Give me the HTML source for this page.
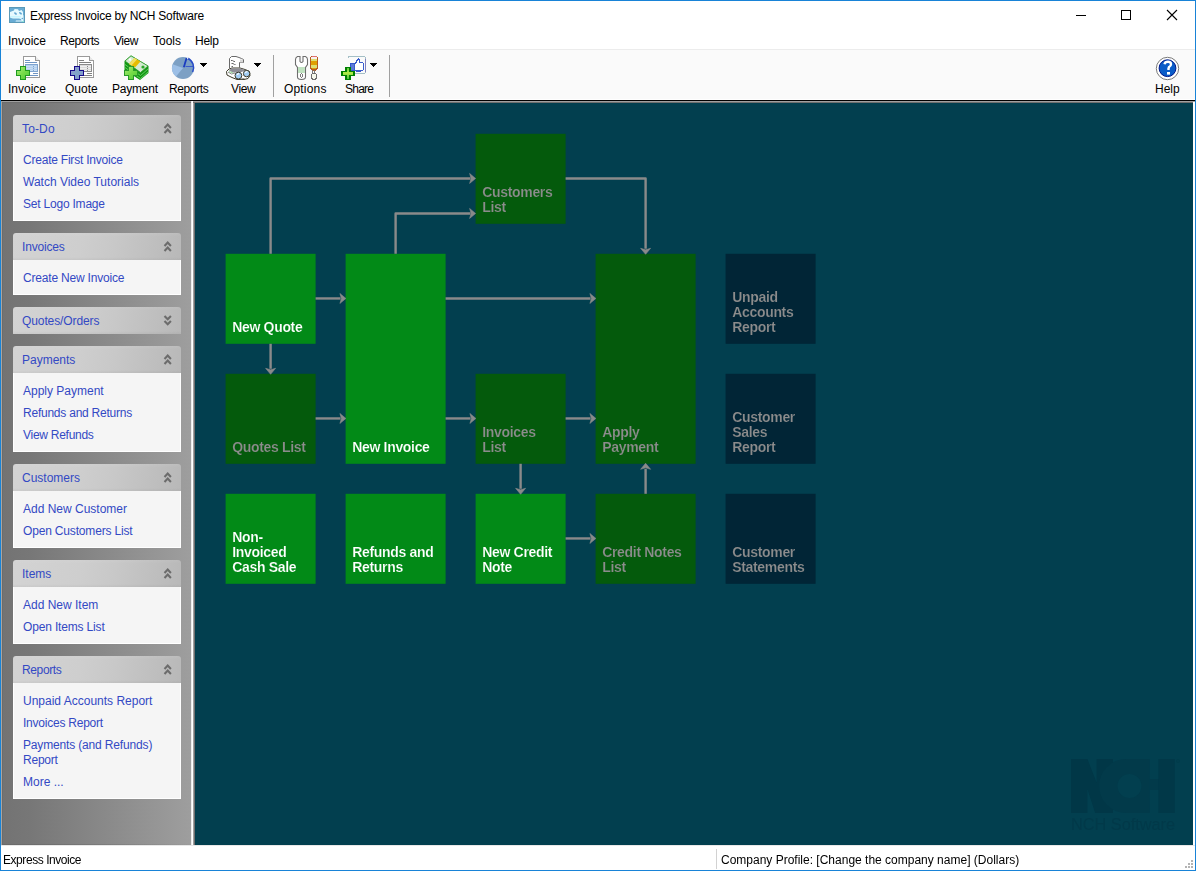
<!DOCTYPE html>
<html><head><meta charset="utf-8">
<style>
*{margin:0;padding:0;box-sizing:border-box}
html,body{width:1196px;height:871px;overflow:hidden;background:#fff}
body{position:relative;font-family:"Liberation Sans",sans-serif;font-size:12px;color:#000}
.a{position:absolute}
.t{position:absolute;white-space:nowrap;line-height:15px;padding-top:1px}
#win{position:absolute;left:0;top:0;width:1196px;height:871px;border:1px solid #1883d7;background:#fff}
#toolbar{position:absolute;left:1px;top:49px;width:1194px;height:51px;background:#fafafa;border-top:1px solid #ececec;border-bottom:1px solid #fff}
#tbline{position:absolute;left:1px;top:100px;width:1194px;height:1px;background:#000}
#tbline2{position:absolute;left:1px;top:101px;width:1194px;height:1px;background:#a0a0a0}
#sidebar{position:absolute;left:1px;top:102px;width:190px;height:743px;border-left:1px solid #aaa5a0;background:linear-gradient(to right,#737373 0%,#777 15%,#878787 50%,#959595 80%,#9e9e9e 100%)}
#sbl{position:absolute;left:2px;top:102px;width:1px;height:743px;background:#6c6c6c}
#sbb{position:absolute;left:2px;top:844px;width:189px;height:1px;background:linear-gradient(to right,#6a6a6a,rgba(150,150,150,0.2))}
#sbtop{position:absolute;left:2px;top:102px;width:189px;height:1px;background:#6e6e6e}
#vsplit{position:absolute;left:191px;top:101px;width:2px;height:744px;background:linear-gradient(to right,#ececec 50%,#fff 50%)}
#vdark{position:absolute;left:193px;top:101px;width:2px;height:744px;background:linear-gradient(to right,#a0a0a0 50%,#6e6e6e 50%)}
#main{position:absolute;left:195px;top:103px;width:998px;height:742px;background:#023f4f}
#mtop{position:absolute;left:193px;top:101px;width:1000px;height:2px;background:linear-gradient(#a0a0a0 50%,#6e6e6e 50%)}
.panel{position:absolute;left:13px;width:168px}
.ph{position:absolute;left:0;top:0;width:168px;height:27px;border-radius:3px 3px 0 0;
 background:linear-gradient(to bottom,rgba(255,255,255,0.05) 0,rgba(255,255,255,0) 4px,rgba(0,0,0,0) 24px,rgba(0,0,0,0.04) 27px),linear-gradient(100deg,#d3d3d3 0%,#cecece 40%,#c8c8c8 60%,#b8b8b8 100%)}
.ph span{position:absolute;left:9px;top:7px;color:#3349c4;line-height:15px}
.pc{position:absolute;left:0;top:27px;width:168px;background:#f5f5f5;border-left:1px solid #fff;border-right:1px solid #fff;border-bottom:1px solid #fff}
.pc div{position:absolute;left:9px;color:#3349c4;line-height:15px;white-space:nowrap}
.chev{position:absolute;left:150px;top:7px}
.box{position:absolute;width:90px;height:90px}
.box span{position:absolute;left:6.6px;bottom:9.3px;font-weight:bold;font-size:14px;letter-spacing:-0.32px;line-height:15px;white-space:nowrap}
.g1{background:#028a17}
.g2{background:#045a0c}
.nv{background:#012536}
.w{color:#fff}
.g1 span{-webkit-text-stroke:0.15px #028a17}
.g2 span{-webkit-text-stroke:0.15px #045a0c}
.nv span{-webkit-text-stroke:0.15px #012536}
.gr{color:#8c8c8c}
</style></head><body>
<div id="win"></div>
<!-- title bar -->
<svg class="a" style="left:9px;top:7px" width="16" height="16" viewBox="9 7 16 16">
<rect x="9.5" y="7.5" width="15" height="15" fill="#68acd4" stroke="#5b9ab8"/>
<path d="M10 12Q12 11 14 10.5L14.5 9L18 9.2L19 11L21.5 10L23 12V15L23.5 15.5V21.5H15.5L16 20.5H21.5L21 19L19 18.5H13L11 18L10 17Z" fill="#e6faff"/>
<ellipse cx="15.5" cy="13.5" rx="1.7" ry="0.9" transform="rotate(40 15.5 13.5)" fill="#62a6d2"/>
<ellipse cx="20.5" cy="13.2" rx="1.7" ry="0.9" transform="rotate(35 20.5 13.2)" fill="#62a6d2"/>
<circle cx="22.3" cy="18.5" r="0.8" fill="#62a6d2"/>
<path d="M10 16H21V17.5H10Z" fill="#c8f6ff"/>
<path d="M22 21H24V22H22Z" fill="#90e8d8"/>
</svg>
<div class="t" style="left:30px;top:8px;letter-spacing:-0.22px">Express Invoice by NCH Software</div>
<div class="a" style="left:1076px;top:15px;width:10px;height:1px;background:#000"></div>
<div class="a" style="left:1121px;top:10px;width:10px;height:10px;border:1px solid #000"></div>
<svg class="a" style="left:1166px;top:9px" width="12" height="12" viewBox="0 0 12 12"><path d="M1 1L11 11M11 1L1 11" stroke="#000" stroke-width="1.1"/></svg>
<!-- menu -->
<div class="t" style="left:8px;top:33px">Invoice</div>
<div class="t" style="left:60px;top:33px;letter-spacing:-0.4px">Reports</div>
<div class="t" style="left:114px;top:33px;letter-spacing:-0.5px">View</div>
<div class="t" style="left:153px;top:33px">Tools</div>
<div class="t" style="left:195px;top:33px;letter-spacing:-0.27px">Help</div>
<!-- toolbar -->
<div id="toolbar"></div>
<div id="tbline"></div><div id="tbline2"></div>
<svg class="a" style="left:0;top:50px" width="400" height="34" viewBox="0 50 400 34" shape-rendering="crispEdges">
<defs>
<linearGradient id="gp" x1="0" y1="0" x2="1" y2="1"><stop offset="0" stop-color="#a8ec80"/><stop offset="0.5" stop-color="#78dc48"/><stop offset="1" stop-color="#48c838"/></linearGradient>
<linearGradient id="bp" x1="0" y1="0" x2="1" y2="1"><stop offset="0" stop-color="#9a8fd4"/><stop offset="0.5" stop-color="#7fa6c8"/><stop offset="1" stop-color="#8d90d0"/></linearGradient>
<linearGradient id="sp" x1="0" y1="0" x2="0" y2="1"><stop offset="0" stop-color="#58c848"/><stop offset="0.45" stop-color="#b8ec48"/><stop offset="1" stop-color="#40c040"/></linearGradient>
</defs>
<!-- invoice doc -->
<g id="doc1">
<path d="M23.5 56.5H35.5L39.5 60.5V77.5H23.5Z" fill="#fff" stroke="#9a9a9a"/>
<path d="M35.5 56.5V60.5H39.5" fill="#e8e8e8" stroke="#9a9a9a"/>
<rect x="25" y="60" width="5" height="1" fill="#6f95c4"/>
<rect x="25" y="62" width="12" height="1" fill="#6f95c4"/>
<rect x="25" y="64" width="13" height="8" fill="#7fa4d0"/>
<rect x="26" y="66" width="7" height="1" fill="#c8def4"/><rect x="34" y="66" width="3" height="1" fill="#c8def4"/>
<rect x="26" y="68" width="7" height="1" fill="#c8def4"/><rect x="34" y="68" width="3" height="1" fill="#c8def4"/>
<rect x="26" y="70" width="7" height="1" fill="#c8def4"/><rect x="34" y="70" width="3" height="1" fill="#c8def4"/>
<rect x="26" y="65" width="11" height="1" fill="#b4d0ee"/><rect x="26" y="67" width="11" height="1" fill="#b4d0ee"/><rect x="26" y="69" width="11" height="1" fill="#b4d0ee"/>
<rect x="33" y="73" width="5" height="1" fill="#6f95c4"/>
<rect x="30" y="75" width="8" height="1" fill="#6f95c4"/>
</g>
<path d="M20.5 66.5H25.5V70.5H29.5V75.5H25.5V79.5H20.5V75.5H16.5V70.5H20.5Z" fill="url(#gp)" stroke="#1f9a1f"/>
<!-- quote doc -->
<path d="M77.5 56.5H89.5L93.5 60.5V77.5H77.5Z" fill="#fff" stroke="#9a9a9a"/>
<path d="M89.5 56.5V60.5H93.5" fill="#e8e8e8" stroke="#9a9a9a"/>
<rect x="79" y="60" width="5" height="1" fill="#808080"/>
<rect x="79" y="62" width="12" height="1" fill="#808080"/>
<rect x="79" y="64" width="13" height="8" fill="#8a8a8a"/>
<rect x="80" y="66" width="7" height="1" fill="#f0f0f0"/><rect x="88" y="66" width="3" height="1" fill="#f0f0f0"/>
<rect x="80" y="68" width="7" height="1" fill="#f0f0f0"/><rect x="88" y="68" width="3" height="1" fill="#f0f0f0"/>
<rect x="80" y="70" width="7" height="1" fill="#f0f0f0"/><rect x="88" y="70" width="3" height="1" fill="#f0f0f0"/>
<rect x="80" y="65" width="11" height="1" fill="#dcdcdc"/><rect x="80" y="67" width="11" height="1" fill="#dcdcdc"/><rect x="80" y="69" width="11" height="1" fill="#dcdcdc"/>
<rect x="87" y="73" width="5" height="1" fill="#808080"/>
<rect x="84" y="75" width="8" height="1" fill="#808080"/>
<path d="M74.5 66.5H79.5V70.5H83.5V75.5H79.5V79.5H74.5V75.5H70.5V70.5H74.5Z" fill="url(#bp)" stroke="#140a88"/>
<!-- payment -->
<g shape-rendering="auto">
<path d="M124.5 61L131 55.5L148.5 66L148.5 73L140 80L124.5 70Z" fill="#129812"/>
<path d="M125 64.5L140.5 75.5L148 69M125 67.5L140.5 78.5L148 72" fill="none" stroke="#6ad06a" stroke-width="0.9"/>
<path d="M125 61L131 55.8L148 66L140.5 72.5Z" fill="#d4ead0" stroke="#2a9a2a" stroke-width="0.8"/>
<path d="M134.5 58L140.5 61.5L135 67.5L129 64Z" fill="#e6bc00"/>
<path d="M134.5 58L137 59.5L131.5 65.5L129 64Z" fill="#f2e060"/>
<circle cx="143" cy="67" r="1.6" fill="#2aa82a"/>
<circle cx="130" cy="59.5" r="1.2" fill="#ffffff"/>
</g>
<path d="M128.5 66.5H133.5V70.5H137.5V75.5H133.5V79.5H128.5V75.5H124.5V70.5H128.5Z" fill="url(#gp)" stroke="#2a9a2a"/>
<!-- reports pie -->
<g shape-rendering="auto">
<circle cx="183" cy="68" r="11" fill="#7ca0c4"/>
<path d="M183 68L172.7 64.2A11 11 0 0 0 176 76.5Z" fill="#9cbfe6"/>
<path d="M183.5 67L186 57.2A11 11 0 0 1 193.8 66.5Z" fill="#7ca0c4"/>
<path d="M183.8 67.3L186.6 58" stroke="#1a3cc0" stroke-width="1.8"/>
<path d="M185.5 66.5H193" stroke="#3a5ccc" stroke-width="1"/>
<path d="M187.5 58.2A10.2 10.2 0 0 1 192.6 72" fill="none" stroke="#2a4cc8" stroke-width="1.5"/>
<path d="M186.5 56.5L188 59" stroke="#fff" stroke-width="1"/>
</g>
<path d="M200 63H207L203.5 67Z" fill="#000"/>
<!-- view -->
<g shape-rendering="auto">
<path d="M229.5 68V58.5L231.5 56.5H236L239 57.5L241.5 58.5L243.5 59.5V62.5H239.5V67.5" fill="#fff" stroke="#6a6a6a" stroke-width="1"/>
<path d="M240 59.5H243V62.5H240Z" fill="#d8d8d8"/>
<path d="M231 60.5H232.5L234 61.5H235M231.5 63.5H233L234.5 64.5H235.5M231.5 66.5H233" stroke="#6a6a6a" stroke-width="1" fill="none"/>
<path d="M226.5 71.5L229 69L232 68H240L245 69.5L249.5 71.5L250 75.5L248 78.5L244 79.5H237L232 77.5L227 75Z" fill="#fff" stroke="#3c3a2a" stroke-width="1"/>
<path d="M231 68.5H241L246 70.5L240 72.5H233L229 70.5Z" fill="#8e8e96"/>
<path d="M228 72L231.5 74L235 73" fill="none" stroke="#7a7a7a" stroke-width="0.9"/>
<path d="M229 71.5L233 73" stroke="#80d080" stroke-width="0.8"/>
<circle cx="238.4" cy="75.6" r="3.4" fill="#a4cef4" stroke="#3c3a2a" stroke-width="1"/>
<circle cx="246.6" cy="73.6" r="3.2" fill="#a4cef4" stroke="#3c3a2a" stroke-width="1"/>
<path d="M237 74.5L239 73.5M245 72.5L247.5 71.5" stroke="#fff" stroke-width="1.2"/>
<path d="M240.5 79L244.5 78.5" stroke="#8a8a8a" stroke-width="1"/>
</g>
<path d="M254 63H261L257.5 67Z" fill="#000"/>
<!-- options -->
<g shape-rendering="auto"><path d="M297.5 56.5H300V61.5Q301.5 63.5 303 61.5V56.5H305.5Q307.5 57.5 307.5 59.5V64.5L305.5 67.5V77Q305.5 79.5 301.5 79.5Q297.5 79.5 297.5 77V67.5L295.5 64.5V59.5Q295.5 57.5 297.5 56.5Z" fill="#fff" stroke="#6e6e6e" stroke-width="1.1"/></g>
<rect x="298.1" y="67" width="6.8" height="6" fill="#c0e2c0"/>
<ellipse cx="301.5" cy="75.5" rx="1.2" ry="2" fill="none" stroke="#6e6e6e" stroke-width="0.9"/>
<path d="M310.5 57.5L311.5 56.5H316.5L317.5 57.5V68L315.5 70H312.5L310.5 68Z" fill="#e0a000" stroke="#b85a20" stroke-width="1.1"/>
<rect x="311" y="57" width="6" height="1.5" fill="#f8f0f0"/><path d="M311.5 56.5H316.5" stroke="#e07070" stroke-width="1"/>
<rect x="311" y="58.5" width="6" height="2.5" fill="#dde070"/>
<rect x="311" y="64.5" width="6" height="3" fill="#dde070"/>
<path d="M312.5 70V73.5M314.5 70V73.5" stroke="#6e6e6e" stroke-width="0.9"/>
<path d="M311.5 74.5L312.5 73.5H315.5L316.5 74.5V77.5L315.5 79.5H312.5L311.5 77.5Z" fill="#f6f8ec" stroke="#6e6e6e" stroke-width="1"/>
<!-- share -->
<path d="M348 58Q348 56.5 349.5 56.5H363.5Q365.5 56.5 365.5 58.5V71.5Q365.5 73.5 363.5 73.5H350" fill="none" stroke="#9ab8c0" stroke-width="0.9"/>
<path d="M365.5 59V72" stroke="#8080c0" stroke-width="1"/>
<path d="M350.5 63.5H354.5V70.5H350.5Z" fill="#5a7ad8" stroke="#3355cc" stroke-width="1"/>
<path d="M354.5 64.5L356.5 62L357.5 59.5Q358.5 58.5 359.5 59.5V62.5H362.5Q363.5 63 363.5 64V69Q363 71 361 71H356L354.5 70Z" fill="#fff" stroke="#3a5ccc" stroke-width="1.1"/>
<path d="M346 67.5H350V71.5H354V75.5H350V79.5H346V75.5H342V71.5H346Z" fill="url(#sp)" stroke="#008000" stroke-width="1.1"/>
<path d="M370 63H377L373.5 67Z" fill="#000"/>
</g>
</svg>
<svg class="a" style="left:1150px;top:52px" width="36" height="32" viewBox="1150 52 36 32">
<circle cx="1167.5" cy="68.5" r="11.2" fill="#fff" stroke="#7a7a7a" stroke-width="1"/>
<circle cx="1167.5" cy="68.2" r="8.4" fill="#0a5cc8" stroke="#00188a" stroke-width="1"/>
<path d="M1164.5 64.2Q1165 61.8 1168 61.8Q1171 61.8 1171 64.2Q1171 66 1169 67L1168.5 68.5V70" fill="none" stroke="#fff" stroke-width="2.4"/>
<rect x="1167" y="72" width="3" height="2.6" fill="#fff"/>
</svg>
<div class="t" style="left:8px;top:81px">Invoice</div>
<div class="t" style="left:65px;top:81px">Quote</div>
<div class="t" style="left:112px;top:81px;letter-spacing:-0.22px">Payment</div>
<div class="t" style="left:169px;top:81px;letter-spacing:-0.38px">Reports</div>
<div class="t" style="left:231px;top:81px;letter-spacing:-0.4px">View</div>
<div class="t" style="left:284px;top:81px;letter-spacing:0.17px">Options</div>
<div class="t" style="left:345px;top:81px;letter-spacing:-0.75px">Share</div>
<div class="t" style="left:1155px;top:81px">Help</div>
<div class="a" style="left:273px;top:55px;width:1px;height:42px;background:#a0a0a0"></div>
<div class="a" style="left:389px;top:55px;width:1px;height:42px;background:#a0a0a0"></div>

<!-- sidebar -->
<div id="sidebar"></div>
<div id="sbtop"></div><div id="sbl"></div><div id="sbb"></div>
<div id="vsplit"></div><div id="vdark"></div>
<div id="mtop"></div>
<div id="main"></div>

<div class="panel" style="top:115px">
 <div class="ph"><span style="letter-spacing:0.15px">To-Do</span><svg class="chev" width="10" height="12"><path d="M1.5 5.9L4.7 2.6L7.9 5.9M1.5 10.9L4.7 7.6L7.9 10.9" stroke="#6c6c6c" stroke-width="2.1" fill="none"/></svg></div>
 <div class="pc" style="height:79px"><div style="top:11px;letter-spacing:-0.22px">Create First Invoice</div><div style="top:33px">Watch Video Tutorials</div><div style="top:55px;letter-spacing:-0.21px">Set Logo Image</div></div>
</div>
<div class="panel" style="top:233px">
 <div class="ph"><span style="letter-spacing:-0.19px">Invoices</span><svg class="chev" width="10" height="12"><path d="M1.5 5.9L4.7 2.6L7.9 5.9M1.5 10.9L4.7 7.6L7.9 10.9" stroke="#6c6c6c" stroke-width="2.1" fill="none"/></svg></div>
 <div class="pc" style="height:35px"><div style="top:11px;letter-spacing:-0.19px">Create New Invoice</div></div>
</div>
<div class="panel" style="top:307px">
 <div class="ph"><span style="letter-spacing:-0.1px">Quotes/Orders</span><svg class="chev" width="10" height="12"><path d="M1.5 2L4.7 5.3L7.9 2M1.5 7L4.7 10.3L7.9 7" stroke="#6c6c6c" stroke-width="2.1" fill="none"/></svg></div>
</div>
<div class="panel" style="top:346px">
 <div class="ph"><span>Payments</span><svg class="chev" width="10" height="12"><path d="M1.5 5.9L4.7 2.6L7.9 5.9M1.5 10.9L4.7 7.6L7.9 10.9" stroke="#6c6c6c" stroke-width="2.1" fill="none"/></svg></div>
 <div class="pc" style="height:79px"><div style="top:11px">Apply Payment</div><div style="top:33px;letter-spacing:-0.23px">Refunds and Returns</div><div style="top:55px;letter-spacing:-0.27px">View Refunds</div></div>
</div>
<div class="panel" style="top:464px">
 <div class="ph"><span>Customers</span><svg class="chev" width="10" height="12"><path d="M1.5 5.9L4.7 2.6L7.9 5.9M1.5 10.9L4.7 7.6L7.9 10.9" stroke="#6c6c6c" stroke-width="2.1" fill="none"/></svg></div>
 <div class="pc" style="height:57px"><div style="top:11px">Add New Customer</div><div style="top:33px;letter-spacing:-0.17px">Open Customers List</div></div>
</div>
<div class="panel" style="top:560px">
 <div class="ph"><span>Items</span><svg class="chev" width="10" height="12"><path d="M1.5 5.9L4.7 2.6L7.9 5.9M1.5 10.9L4.7 7.6L7.9 10.9" stroke="#6c6c6c" stroke-width="2.1" fill="none"/></svg></div>
 <div class="pc" style="height:57px"><div style="top:11px">Add New Item</div><div style="top:33px;letter-spacing:-0.16px">Open Items List</div></div>
</div>
<div class="panel" style="top:656px">
 <div class="ph"><span style="letter-spacing:-0.37px">Reports</span><svg class="chev" width="10" height="12"><path d="M1.5 5.9L4.7 2.6L7.9 5.9M1.5 10.9L4.7 7.6L7.9 10.9" stroke="#6c6c6c" stroke-width="2.1" fill="none"/></svg></div>
 <div class="pc" style="height:116px"><div style="top:11px">Unpaid Accounts Report</div><div style="top:33px;letter-spacing:-0.23px">Invoices Report</div><div style="top:55px;letter-spacing:-0.16px">Payments (and Refunds)</div><div style="top:70px;letter-spacing:-0.22px">Report</div><div style="top:92px">More ...</div></div>
</div>

<!-- flowchart -->
<div id="flow" class="a" style="left:0;top:0;width:1196px;height:871px;transform:translate(0.6px,0.8px);will-change:transform">
<div class="box g2" style="left:475px;top:133px"><span class="gr">Customers<br>List</span></div>
<div class="box g1" style="left:225px;top:253px"><span class="w">New Quote</span></div>
<div class="box g1" style="left:345px;top:253px;width:100px;height:210px"><span class="w">New Invoice</span></div>
<div class="box g2" style="left:595px;top:253px;width:100px;height:210px"><span class="gr">Apply<br>Payment</span></div>
<div class="box nv" style="left:725px;top:253px"><span class="gr">Unpaid<br>Accounts<br>Report</span></div>
<div class="box g2" style="left:225px;top:373px"><span class="gr">Quotes List</span></div>
<div class="box g2" style="left:475px;top:373px"><span class="gr">Invoices<br>List</span></div>
<div class="box nv" style="left:725px;top:373px"><span class="gr">Customer<br>Sales<br>Report</span></div>
<div class="box g1" style="left:225px;top:493px"><span class="w">Non-<br>Invoiced<br>Cash Sale</span></div>
<div class="box g1" style="left:345px;top:493px;width:100px"><span class="w">Refunds and<br>Returns</span></div>
<div class="box g1" style="left:475px;top:493px"><span class="w">New Credit<br>Note</span></div>
<div class="box g2" style="left:595px;top:493px;width:100px"><span class="gr">Credit Notes<br>List</span></div>
<div class="box nv" style="left:725px;top:493px"><span class="gr">Customer<br>Statements</span></div>

<svg class="a" style="left:0;top:0" width="1196" height="871">
<g stroke="#8a8a8a" stroke-width="2.4" fill="none" stroke-linejoin="round">
<path d="M270 253V177.65H470"/>
<path d="M395 253V212.65H470"/>
<path d="M565 177.65H645V248"/>
<path d="M315 297.65H340"/>
<path d="M445 297.65H590"/>
<path d="M270 343V368"/>
<path d="M315 417.65H340"/>
<path d="M445 417.65H470"/>
<path d="M565 417.65H590"/>
<path d="M520 463V488"/>
<path d="M565 537.65H590"/>
<path d="M645 493V468"/>
</g>
<g fill="#8a8a8a" stroke="#8a8a8a" stroke-width="0.6" stroke-linejoin="round">
<path d="M475 177.65L469 172.65L470.5 177.65L469 182.65Z"/>
<path d="M475 212.65L469 207.65L470.5 212.65L469 217.65Z"/>
<path d="M645 253.5L640 247.5L645 249.0L650 247.5Z"/>
<path d="M345.3 297.65L339.3 292.65L340.8 297.65L339.3 302.65Z"/>
<path d="M595.3 297.65L589.3 292.65L590.8 297.65L589.3 302.65Z"/>
<path d="M270 373.5L265 367.5L270 369.0L275 367.5Z"/>
<path d="M345.3 417.65L339.3 412.65L340.8 417.65L339.3 422.65Z"/>
<path d="M475.3 417.65L469.3 412.65L470.8 417.65L469.3 422.65Z"/>
<path d="M595.3 417.65L589.3 412.65L590.8 417.65L589.3 422.65Z"/>
<path d="M520 493.5L515 487.5L520 489.0L525 487.5Z"/>
<path d="M595.3 537.65L589.3 532.65L590.8 537.65L589.3 542.65Z"/>
<path d="M645 462.5L640 468.5L645 467.0L650 468.5Z"/>
</g>
</svg>

</div>
<!-- NCH watermark -->
<svg class="a" style="left:1060px;top:750px" width="130" height="90" viewBox="1060 750 130 90">
<path d="M1071 759H1087.4L1096.6 782.5V759H1113V813H1095.2L1087.4 788.9V813H1071Z" fill="#013747"/>
<path fill-rule="evenodd" d="M1126 759H1149.7V813H1126A27 27 0 0 1 1126 759ZM1129.5 774A12 12 0 1 0 1129.5 798A12 12 0 1 0 1129.5 774Z" fill="#023a4a"/>
<rect x="1149.5" y="779" width="9.2" height="11" fill="#023a4a"/>
<rect x="1158.4" y="759" width="16.3" height="54" fill="#013848"/>
<text x="1071" y="830" font-family="Liberation Sans" font-size="16.3" fill="#023949">NCH Software</text>
<circle cx="1178" cy="761" r="1.5" fill="none" stroke="#023a4a" stroke-width="0.6"/>
</svg>
<!-- status bar -->
<div class="a" style="left:1px;top:845px;width:1194px;height:1px;background:#e8e8e8"></div>
<div class="t" style="left:3px;top:852px;letter-spacing:-0.44px">Express Invoice</div>
<div class="a" style="left:716px;top:849px;width:1px;height:20px;background:#d2d2d2"></div>
<div class="t" style="left:721px;top:852px">Company Profile: [Change the company name] (Dollars)</div>
<svg class="a" style="left:1184px;top:859px" width="10" height="10" viewBox="1184 859 10 10" fill="#b4b4b4"><rect x="1191" y="860" width="2" height="2"/><rect x="1188" y="863" width="2" height="2"/><rect x="1191" y="863" width="2" height="2"/><rect x="1185" y="866" width="2" height="2"/><rect x="1188" y="866" width="2" height="2"/><rect x="1191" y="866" width="2" height="2"/></svg>
</body></html>
